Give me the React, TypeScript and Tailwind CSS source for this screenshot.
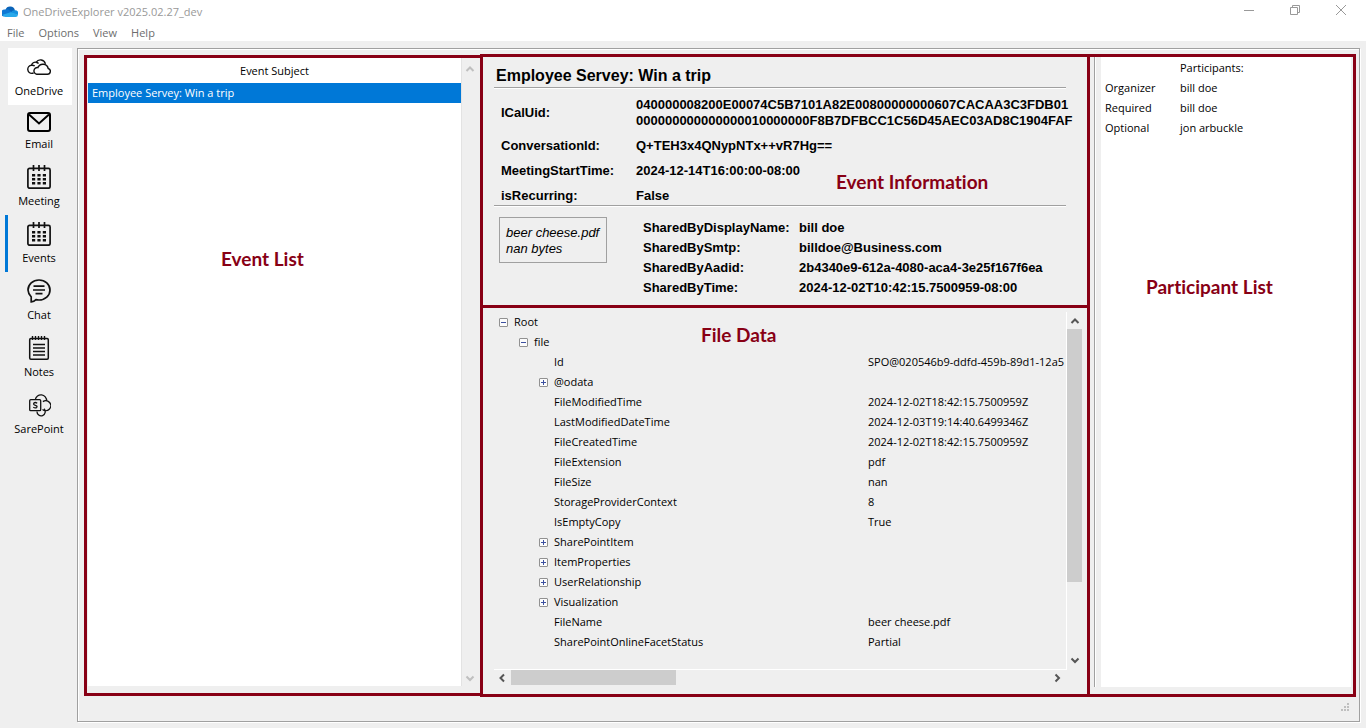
import React from "react";

const OneDriveLogo = () => (
  <svg width="16" height="16" viewBox="0 0 16 16" aria-hidden="true">
    <path d="M3.4 6A5 5 0 0 1 13 6.4L9 10 3 7Z" fill="#0a63b8" />
    <path d="M3.5 5.6a4 4 0 0 1 4.3 .9L12 9.600 2 12.600A3.500 3.500 0 0 1 3.500 5.600Z" fill="#0f78d4" />
    <path d="M9 8.200a4 4 0 0 1 3.700-1.900A3.200 3.200 0 0 1 16 11L9 9Z" fill="#1490df" />
    <path d="M.6 10.800 8.600 8.300l7.300 2.300A2.300 2.300 0 0 1 13.600 13H3.500A3.300 3.300 0 0 1 .6 10.800Z" fill="#28a8ea" />
  </svg>
);

const CloudIcon = () => (
  <svg width="24" height="24" viewBox="0 0 24 24" fill="none" stroke="#111" strokeWidth="1.4" aria-hidden="true">
    <path d="M9.700 19.200H20.400a2.900 2.900 0 0 0 .8-5.700A5.400 5.400 0 0 0 10.900 12.600A3.300 3.300 0 0 0 9.700 19.200Z" />
    <path d="M6.600 18.300H5.200A4 4 0 0 1 4.500 10.200A4 4 0 0 1 9.200 7.200A5.100 5.100 0 0 1 18.400 8.800M4.500 10.300a5 5 0 0 1 3.200 .6M9.200 7.300a5 5 0 0 1 2.400 1.300" />
  </svg>
);

const MailIcon = () => (
  <svg width="24" height="20" viewBox="0 0 24 20" fill="none" stroke="#000" strokeWidth="2" aria-hidden="true">
    <rect x="1" y="1" width="22" height="18" rx="2" />
    <path d="M2 2.500 12 11.500 22 2.500" />
  </svg>
);

const CalendarIcon = () => (
  <svg width="24" height="24" viewBox="0 0 24 24" fill="none" stroke="#111" aria-hidden="true">
    <rect x="0.9" y="3.400" width="22.200" height="19.800" rx="1.600" strokeWidth="1.700" />
    <path d="M6.500 0V6M12 0V6M17.500 0V6" strokeWidth="1.700" />
    <path d="M5 10.200H19M5 14.200H19M5 18.200H19" strokeWidth="2.600" strokeDasharray="3.200 2.200" />
  </svg>
);

const ChatIcon = () => (
  <svg width="24" height="24" viewBox="0 0 24 24" fill="none" stroke="#111" strokeWidth="1.700" aria-hidden="true">
    <path d="M4.200 22.900V17.800A10 10 0 0 1 1 11C1 5.400 5.900 1 12 1S23 5.400 23 11 18.100 21 12 21A13 13 0 0 1 9 20.600Q7 22.600 4.200 22.900Z" />
    <path d="M6.500 7.200H17.500M6 11H18M8.500 14.700H15.500" />
  </svg>
);

const NotesIcon = () => (
  <svg width="24" height="24" viewBox="0 0 24 24" fill="none" stroke="#111" aria-hidden="true">
    <rect x="2.700" y="2.600" width="18.600" height="20.600" rx="1.200" strokeWidth="1.500" />
    <path d="M5.500 0V4M8.500 0V4M11.500 0V4M14.500 0V4M17.500 0V4" strokeWidth="1.400" />
    <path d="M6 8.500H18M6 12H18M6 15.500H18M6 19H18" strokeWidth="1.400" />
  </svg>
);

const SharePointIcon = () => (
  <svg width="24" height="24" viewBox="0 0 24 24" fill="none" stroke="#111" strokeWidth="1.300" aria-hidden="true">
    <path d="M8.300 6.500A5.700 5.700 0 0 1 19.600 7.800" />
    <path d="M15.900 8.600A5 5 0 1 1 15.500 16.500" />
    <path d="M10 18.500A4.100 4.100 0 1 0 17 15.800" />
    <rect x="2.700" y="6.700" width="11" height="11" rx="1" />
    <path d="M10.200 10.200Q8.200 8.900 6.900 10.100C6 11.500 7.400 12 8.400 12.300S10.600 13.300 9.700 14.400Q8.300 15.500 6.300 14.300" />
  </svg>
);

const paths = {
  up: "M2.500 8 6 4.500 9.500 8",
  down: "M2.500 4.500 6 8 9.500 4.500",
  left: "M8 2.500 4.500 6 8 9.500",
  right: "M4.500 2.500 8 6 4.500 9.500",
};

const ScrollArrow = ({ dir, faint }: { dir: keyof typeof paths; faint?: boolean }) => (
  <button type="button" aria-label={`Scroll ${dir}`} className="flex size-4 shrink-0 items-center justify-center">
    <svg width="12" height="12" viewBox="0 0 12 12" fill="none" stroke={faint ? "#bfbfbf" : "#555"} strokeWidth="2">
      <path d={paths[dir]} />
    </svg>
  </button>
);

const Note = ({ children, className }: { children: React.ReactNode; className: string }) => (
  <span
    className={`absolute font-[Lato,sans-serif] text-[19px] leading-6 font-bold whitespace-nowrap text-[#880015] [font-variant-ligatures:none] ${className}`}
  >
    {children}
  </span>
);

const navItems: { label: string; Icon: React.FC; state: string }[] = [
  { label: "OneDrive", Icon: CloudIcon, state: "bg-white" },
  { label: "Email", Icon: MailIcon, state: "bg-transparent" },
  { label: "Meeting", Icon: CalendarIcon, state: "bg-transparent" },
  { label: "Events", Icon: CalendarIcon, state: "bg-transparent" },
  { label: "Chat", Icon: ChatIcon, state: "bg-transparent" },
  { label: "Notes", Icon: NotesIcon, state: "bg-transparent" },
  { label: "SarePoint", Icon: SharePointIcon, state: "bg-transparent" },
];

type Node = { name: string; value?: string; indent: string; mark?: "plus" | "minus" };

const tree: Node[] = [
  { name: "Root", indent: "pl-[5px]", mark: "minus" },
  { name: "file", indent: "pl-[25px]", mark: "minus" },
  { name: "Id", value: "SPO@020546b9-ddfd-459b-89d1-12a5", indent: "pl-[45px]" },
  { name: "@odata", indent: "pl-[45px]", mark: "plus" },
  { name: "FileModifiedTime", value: "2024-12-02T18:42:15.7500959Z", indent: "pl-[45px]" },
  { name: "LastModifiedDateTime", value: "2024-12-03T19:14:40.6499346Z", indent: "pl-[45px]" },
  { name: "FileCreatedTime", value: "2024-12-02T18:42:15.7500959Z", indent: "pl-[45px]" },
  { name: "FileExtension", value: "pdf", indent: "pl-[45px]" },
  { name: "FileSize", value: "nan", indent: "pl-[45px]" },
  { name: "StorageProviderContext", value: "8", indent: "pl-[45px]" },
  { name: "IsEmptyCopy", value: "True", indent: "pl-[45px]" },
  { name: "SharePointItem", indent: "pl-[45px]", mark: "plus" },
  { name: "ItemProperties", indent: "pl-[45px]", mark: "plus" },
  { name: "UserRelationship", indent: "pl-[45px]", mark: "plus" },
  { name: "Visualization", indent: "pl-[45px]", mark: "plus" },
  { name: "FileName", value: "beer cheese.pdf", indent: "pl-[45px]" },
  { name: "SharePointOnlineFacetStatus", value: "Partial", indent: "pl-[45px]" },
];

const Toggle = ({ mark, name }: { mark: "plus" | "minus"; name: string }) => (
  <button type="button" aria-label={`Toggle ${name}`} className="block size-[9px]">
    <svg width="9" height="9" viewBox="0 0 9 9" fill="none" className="block">
      <rect x="0.5" y="0.5" width="8" height="8" rx="0.5" fill="#fcfcfc" stroke="#919191" />
      <path d={mark === "plus" ? "M2 4.5H7M4.5 2V7" : "M2 4.5H7"} stroke="#3c50a0" />
    </svg>
  </button>
);

const details = [
  ["ConversationId:", "Q+TEH3x4QNypNTx++vR7Hg=="],
  ["MeetingStartTime:", "2024-12-14T16:00:00-08:00"],
  ["isRecurring:", "False"],
];

const shared = [
  ["SharedByDisplayName:", "bill doe"],
  ["SharedBySmtp:", "billdoe@Business.com"],
  ["SharedByAadid:", "2b4340e9-612a-4080-aca4-3e25f167f6ea"],
  ["SharedByTime:", "2024-12-02T10:42:15.7500959-08:00"],
];

const participants = [
  ["Organizer", "bill doe"],
  ["Required", "bill doe"],
  ["Optional", "jon arbuckle"],
];

const Rule = () => <hr className="h-[2px] border-0 border-t border-t-[#a0a0a0] bg-white" />;

export default function App() {
  return (
    <div className="flex min-h-screen flex-col bg-[#efefef] font-['Open_Sans','Noto_Sans',sans-serif] text-[11px] leading-5 text-black">
      <header className="bg-white">
        <div className="flex h-[23px] items-center">
          <div className="flex flex-1 items-center gap-[5px] pl-[2px] text-[#999]">
            <OneDriveLogo />
            <span>OneDriveExplorer v2025.02.27_dev</span>
          </div>
          <div className="flex self-start pr-[2px] text-[#999]">
            <button type="button" aria-label="Minimize" className="flex h-5 w-[46px] items-center justify-center">
              <svg width="10" height="10" viewBox="0 0 10 10" stroke="currentColor"><path d="M0 5.5H10" /></svg>
            </button>
            <button type="button" aria-label="Restore" className="flex h-5 w-[46px] items-center justify-center">
              <svg width="10" height="10" viewBox="0 0 10 10" fill="none" stroke="currentColor">
                <path d="M.5 2.500H7.500V9.500H.5ZM2.500 2.500V.5H9.500V7.500H7.500" />
              </svg>
            </button>
            <button type="button" aria-label="Close" className="flex h-5 w-[46px] items-center justify-center">
              <svg width="10" height="10" viewBox="0 0 10 10" stroke="currentColor"><path d="M0 0 10 10M10 0 0 10" /></svg>
            </button>
          </div>
        </div>
        <nav className="flex h-[18px] items-center gap-[14px] pt-px pl-[7px] text-[#6d6d6d]">
          <button type="button">File</button>
          <button type="button">Options</button>
          <button type="button">View</button>
          <button type="button">Help</button>
        </nav>
      </header>

      <div className="flex flex-1 pt-[7px] pr-[6px] pb-[6px]">
        <nav className="flex w-[77px] shrink-0 flex-col px-[5px]">
          {navItems.map(({ label, Icon, state }) => (
            <div key={label} className={label === "Events" ? "border-l-[3px] border-[#0078d7]" : "border-l-[3px] border-transparent"}>
              <button type="button" className={`flex w-full flex-col items-center pt-[7px] pr-[2px] pb-[2px] ${state}`}>
                <Icon />
                <span className="leading-6">{label}</span>
              </button>
            </div>
          ))}
        </nav>

        <main className="flex min-w-0 flex-1 flex-col border border-[#a0a0a0] pt-[5px] pr-[3px] pl-[6px] shadow-[1px_1px_0_#fff,inset_1px_1px_0_#fff]">
          <div className="flex flex-1">
            <section className="relative my-px flex w-[399px] shrink-0 border-[3px] border-[#880015] pb-[7px] pl-px">
              <div className="flex-1 bg-white">
                <table className="w-full">
                  <thead>
                    <tr><th className="h-[25px] p-0 font-normal">Event Subject</th></tr>
                  </thead>
                  <tbody>
                    <tr><td className="h-5 bg-[#0078d7] p-0 pl-1 text-white">Employee Servey: Win a trip</td></tr>
                  </tbody>
                </table>
              </div>
              <div className="mr-[2px] flex w-[17px] flex-col items-center justify-between border-l border-[#e3e3e3] pt-[3px]">
                <ScrollArrow dir="up" faint />
                <ScrollArrow dir="down" faint />
              </div>
              <Note className="top-[189px] left-[134px]">Event List</Note>
            </section>

            <div className="z-10 -ml-[3px] flex min-w-0 flex-1 flex-col border-[3px] border-[#880015]">
              <section className="relative h-[251px] shrink-0 border-b-[3px] border-[#880015] pr-[21px] pl-[11px] font-['Liberation_Sans',Arial,sans-serif] text-[13px] leading-4 font-bold">
                <h1 className="h-[30px] pt-[9px] pl-[2px] text-[16px] leading-5">Employee Servey: Win a trip</h1>
                <Rule />
                <dl className="grid grid-cols-[135px_1fr] gap-y-[9px] pt-2 pb-px pl-[7px]">
                  <dt className="self-center">ICalUid:</dt>
                  <dd className="whitespace-nowrap">
                    040000008200E00074C5B7101A82E00800000000607CACAA3C3FDB01
                    <br />
                    000000000000000010000000F8B7DFBCC1C56D45AEC03AD8C1904FAF
                  </dd>
                  {details.map(([k, v]) => (
                    <React.Fragment key={k}><dt>{k}</dt><dd>{v}</dd></React.Fragment>
                  ))}
                </dl>
                <Rule />
                <div className="flex items-start gap-9 pt-[10px] pl-[5px]">
                  <button type="button" className="h-[46px] w-[108px] border border-[#a0a0a0] pt-px pl-[6px] text-left font-normal whitespace-nowrap italic">
                    beer cheese.pdf<br />nan bytes
                  </button>
                  <dl className="grid grid-cols-[156px_1fr] pt-px leading-5">
                    {shared.map(([k, v]) => (
                      <React.Fragment key={k}><dt>{k}</dt><dd>{v}</dd></React.Fragment>
                    ))}
                  </dl>
                </div>
                <Note className="top-[113px] left-[353px]">Event Information</Note>
              </section>

              <section className="relative flex flex-1 flex-col pt-1 pr-[5px] pb-[9px] pl-[11px]">
                <div className="flex min-h-0 flex-1">
                  <div className="min-w-0 flex-1 overflow-hidden border-r border-b border-white">
                    <table className="w-full table-fixed">
                      <colgroup><col className="w-[374px]" /><col /></colgroup>
                      <tbody>
                        {tree.map(({ name, value, indent, mark }) => (
                          <tr key={name}>
                            <td className="h-5 p-0">
                              <div className={`flex items-center gap-[6px] ${indent}`}>
                                {mark ? <Toggle mark={mark} name={name} /> : <span className="w-[9px]" />}
                                <span>{name}</span>
                              </div>
                            </td>
                            <td className="p-0 whitespace-nowrap">{value}</td>
                          </tr>
                        ))}
                      </tbody>
                    </table>
                  </div>
                  <div className="flex w-[15px] shrink-0 flex-col items-center pt-px pb-[2px]">
                    <ScrollArrow dir="up" />
                    <div className="h-[253px] w-full bg-[#cdcdcd]" />
                    <div className="flex-1" />
                    <ScrollArrow dir="down" />
                  </div>
                </div>
                <div className="mr-[15px] flex h-[15px] items-center pr-[2px]">
                  <ScrollArrow dir="left" />
                  <div className="ml-px h-full w-[165px] bg-[#cdcdcd]" />
                  <div className="flex-1" />
                  <ScrollArrow dir="right" />
                </div>
                <Note className="top-[15px] left-[218px]">File Data</Note>
              </section>
            </div>

            <section className="relative -ml-[3px] flex w-[269px] shrink-0 border-[3px] border-[#880015] pr-[2px] pb-[7px] pl-1">
              <div className="w-[2px] border-l border-[#a0a0a0] bg-white" />
              <div className="ml-[5px] flex-1 bg-white pt-px pl-1">
                <table>
                  <thead>
                    <tr><td className="w-[75px] p-0" /><th className="h-5 p-0 text-left font-normal">Participants:</th></tr>
                  </thead>
                  <tbody>
                    {participants.map(([role, name]) => (
                      <tr key={role}><td className="h-5 p-0">{role}</td><td className="p-0">{name}</td></tr>
                    ))}
                  </tbody>
                </table>
              </div>
              <Note className="top-[218px] left-[56px]">Participant List</Note>
            </section>
          </div>
          <footer className="flex h-6 items-center justify-end pr-[7px] pb-1">
            <svg width="8" height="8" viewBox="0 0 8 8" fill="#bfbfbf" aria-hidden="true">
              <path d="M6 0H8V2H6ZM3 3H5V5H3ZM6 3H8V5H6ZM0 6H2V8H0ZM3 6H5V8H3ZM6 6H8V8H6Z" />
            </svg>
          </footer>
        </main>
      </div>
    </div>
  );
}
